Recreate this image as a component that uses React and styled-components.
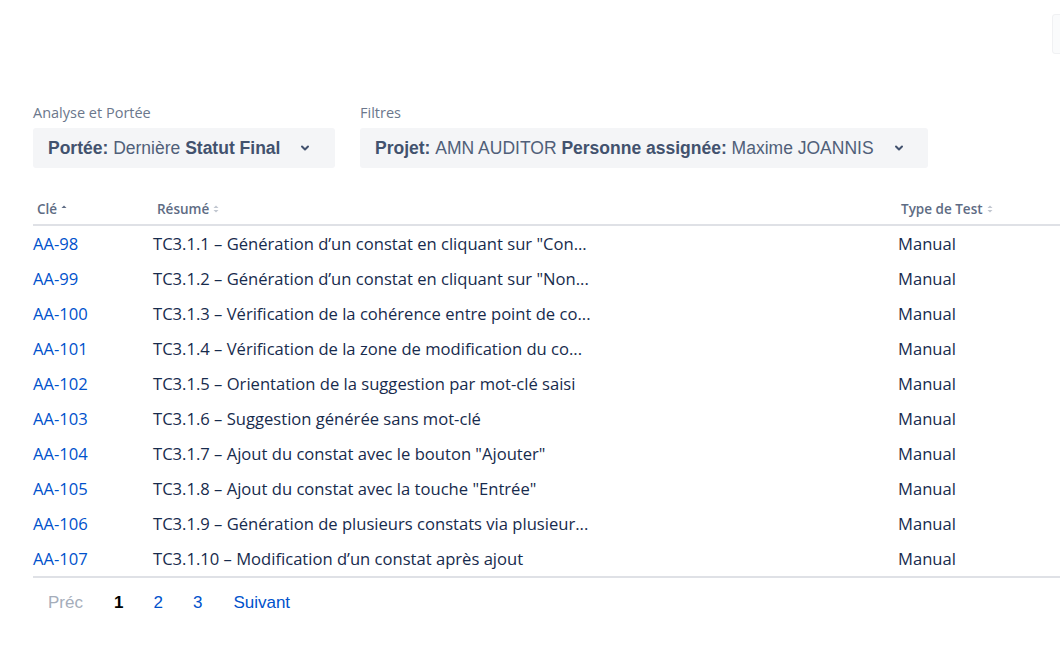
import React from 'react'
import styled, { createGlobalStyle } from 'styled-components'

const Global = createGlobalStyle`
  html, body {
    margin: 0;
    padding: 0;
    background: #fff;
    overflow: hidden;
  }
  body {
    font-family: "Open Sans", "Noto Sans", sans-serif;
    color: #172b4d;
  }
`

const rows = [
  ['AA-98', 'TC3.1.1 – Génération d’un constat en cliquant sur "Con...'],
  ['AA-99', 'TC3.1.2 – Génération d’un constat en cliquant sur "Non...'],
  ['AA-100', 'TC3.1.3 – Vérification de la cohérence entre point de co...'],
  ['AA-101', 'TC3.1.4 – Vérification de la zone de modification du co...'],
  ['AA-102', 'TC3.1.5 – Orientation de la suggestion par mot-clé saisi'],
  ['AA-103', 'TC3.1.6 – Suggestion générée sans mot-clé'],
  ['AA-104', 'TC3.1.7 – Ajout du constat avec le bouton "Ajouter"'],
  ['AA-105', 'TC3.1.8 – Ajout du constat avec la touche "Entrée"'],
  ['AA-106', 'TC3.1.9 – Génération de plusieurs constats via plusieur...'],
  ['AA-107', 'TC3.1.10 – Modification d’un constat après ajout'],
]

const Page = styled.div`
  position: relative;
  width: 1060px;
  height: 649px;
  overflow: hidden;
  padding: 104px 0 0 33px;
  box-sizing: border-box;
`

const Corner = styled.div`
  position: absolute;
  top: 14px;
  left: 1052px;
  width: 30px;
  height: 38px;
  border: 1px solid #f0f1f3;
  border-radius: 3px;
  background: #fafbfc;
`

const Filters = styled.div`
  display: flex;
  gap: 25px;
`

const Field = styled.div`
  display: flex;
  flex-direction: column;
  gap: 6px;
`

const Label = styled.div`
  font-family: "Open Sans", sans-serif;
  font-size: 14.5px;
  color: #6b778c;
  line-height: 18px;
`

const Select = styled.div`
  width: ${p => p.$w}px;
  height: 40px;
  box-sizing: border-box;
  background: #f4f5f7;
  border-radius: 3px;
  display: flex;
  align-items: center;
  padding: 0 0 0 15px;
  font-family: "Liberation Sans", Arial, sans-serif;
  font-size: 17.5px;
  color: #505f79;
  white-space: nowrap;
  b {
    color: #42526e;
    font-weight: 700;
  }
`

const Chevron = styled.svg`
  margin-left: ${p => p.$gap}px;
  width: 12px;
  height: 12px;
`

const Table = styled.div`
  margin-top: 28px;
  width: 1100px;
`

const HeadRow = styled.div`
  display: grid;
  grid-template-columns: 120px 745px 1fr;
  height: 30px;
  align-items: center;
  border-bottom: 2px solid #dfe1e6;
  box-sizing: border-box;
  padding-bottom: 2px;
`

const HeadCell = styled.div`
  display: flex;
  align-items: center;
  gap: 3px;
  padding-left: ${p => p.$pad}px;
  font-size: 13.5px;
  font-weight: 600;
  color: #5e6c84;
`

const Row = styled.div`
  display: grid;
  grid-template-columns: 120px 745px 1fr;
  height: 35px;
  align-items: center;
  font-size: 16.6px;
  color: #172b4d;
  white-space: nowrap;
`

const Key = styled.a`
  color: #0052cc;
  text-decoration: none;
`

const Footer = styled.div`
  border-top: 2px solid #dfe1e6;
  width: 1100px;
  display: flex;
  align-items: center;
  height: 50px;
  padding-left: 15px;
  font-family: "Liberation Sans", Arial, sans-serif;
  font-size: 17px;
`

const PageLink = styled.span`
  margin-right: ${p => p.$mr}px;
  color: ${p => (p.$current ? '#000' : p.$disabled ? '#a5adba' : '#0052cc')};
  font-weight: ${p => (p.$current ? 700 : 400)};
`

const SortIcon = ({ active }) => (
  <svg width="8" height="12" viewBox="0 0 8 12">
    <path d="M1.5 5 L4 2.5 L6.5 5 Z" fill={active ? '#5e6c84' : '#c1c7d0'} />
    {!active && <path d="M1.5 7 L4 9.5 L6.5 7 Z" fill="#c1c7d0" />}
  </svg>
)

const ChevronDown = ({ gap }) => (
  <Chevron $gap={gap} viewBox="0 0 12 12">
    <path d="M3 4.5 L6 7.5 L9 4.5" fill="none" stroke="#42526e" strokeWidth="2" strokeLinecap="round" strokeLinejoin="round" />
  </Chevron>
)

export default function App() {
  return (
    <>
      <Global />
      <Page>
        <Corner />
        <Filters>
          <Field>
            <Label>Analyse et Portée</Label>
            <Select $w={302}>
              <b>Portée:</b>&nbsp;Dernière&nbsp;<b>Statut Final</b>
              <ChevronDown gap={19} />
            </Select>
          </Field>
          <Field>
            <Label>Filtres</Label>
            <Select $w={568}>
              <b>Projet:</b>&nbsp;AMN AUDITOR&nbsp;<b>Personne assignée:</b>&nbsp;Maxime JOANNIS
              <ChevronDown gap={19} />
            </Select>
          </Field>
        </Filters>
        <Table>
          <HeadRow>
            <HeadCell $pad={4}>Clé <SortIcon active /></HeadCell>
            <HeadCell $pad={4}>Résumé <SortIcon /></HeadCell>
            <HeadCell $pad={3}>Type de Test <SortIcon /></HeadCell>
          </HeadRow>
          {rows.map(([k, s]) => (
            <Row key={k}>
              <Key href="#">{k}</Key>
              <span>{s}</span>
              <span>Manual</span>
            </Row>
          ))}
        </Table>
        <Footer>
          <PageLink $disabled $mr={31}>Préc</PageLink>
          <PageLink $current $mr={30}>1</PageLink>
          <PageLink $mr={30}>2</PageLink>
          <PageLink $mr={31}>3</PageLink>
          <PageLink>Suivant</PageLink>
        </Footer>
      </Page>
    </>
  )
}
